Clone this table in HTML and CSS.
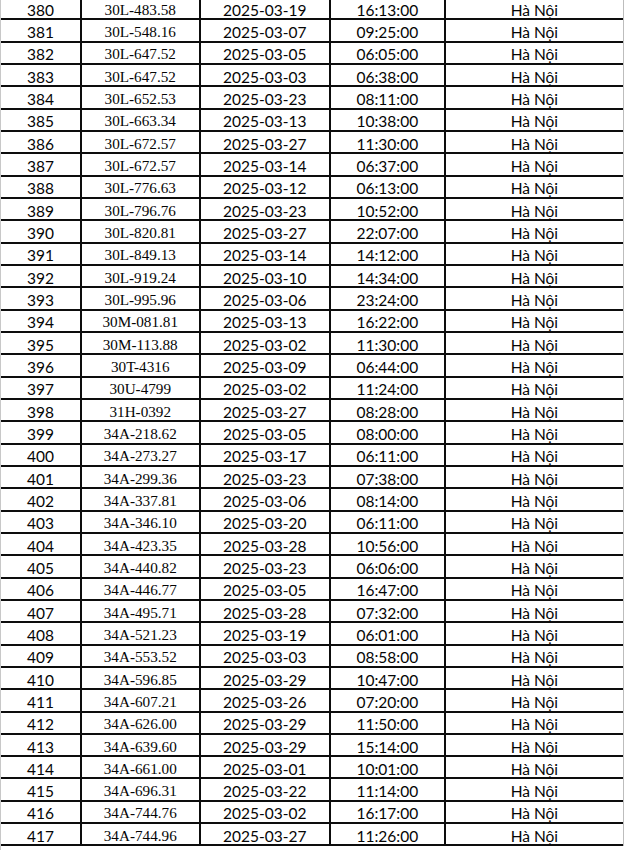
FILE: index.html
```html
<!DOCTYPE html>
<html lang="vi">
<head>
<meta charset="utf-8">
<title>Danh sách</title>
<link rel="stylesheet" href="styles.css">
</head>
<body>
<div class="sheet">
<div class="grid" id="grid">
<div class="c n">380</div><div class="c p">30L-483.58</div><div class="c d">2025-03-19</div><div class="c t">16:13:00</div><div class="c h">Hà Nội</div>
<div class="c n">381</div><div class="c p">30L-548.16</div><div class="c d">2025-03-07</div><div class="c t">09:25:00</div><div class="c h">Hà Nội</div>
<div class="c n">382</div><div class="c p">30L-647.52</div><div class="c d">2025-03-05</div><div class="c t">06:05:00</div><div class="c h">Hà Nội</div>
<div class="c n">383</div><div class="c p">30L-647.52</div><div class="c d">2025-03-03</div><div class="c t">06:38:00</div><div class="c h">Hà Nội</div>
<div class="c n">384</div><div class="c p">30L-652.53</div><div class="c d">2025-03-23</div><div class="c t">08:11:00</div><div class="c h">Hà Nội</div>
<div class="c n">385</div><div class="c p">30L-663.34</div><div class="c d">2025-03-13</div><div class="c t">10:38:00</div><div class="c h">Hà Nội</div>
<div class="c n">386</div><div class="c p">30L-672.57</div><div class="c d">2025-03-27</div><div class="c t">11:30:00</div><div class="c h">Hà Nội</div>
<div class="c n">387</div><div class="c p">30L-672.57</div><div class="c d">2025-03-14</div><div class="c t">06:37:00</div><div class="c h">Hà Nội</div>
<div class="c n">388</div><div class="c p">30L-776.63</div><div class="c d">2025-03-12</div><div class="c t">06:13:00</div><div class="c h">Hà Nội</div>
<div class="c n">389</div><div class="c p">30L-796.76</div><div class="c d">2025-03-23</div><div class="c t">10:52:00</div><div class="c h">Hà Nội</div>
<div class="c n">390</div><div class="c p">30L-820.81</div><div class="c d">2025-03-27</div><div class="c t">22:07:00</div><div class="c h">Hà Nội</div>
<div class="c n">391</div><div class="c p">30L-849.13</div><div class="c d">2025-03-14</div><div class="c t">14:12:00</div><div class="c h">Hà Nội</div>
<div class="c n">392</div><div class="c p">30L-919.24</div><div class="c d">2025-03-10</div><div class="c t">14:34:00</div><div class="c h">Hà Nội</div>
<div class="c n">393</div><div class="c p">30L-995.96</div><div class="c d">2025-03-06</div><div class="c t">23:24:00</div><div class="c h">Hà Nội</div>
<div class="c n">394</div><div class="c p">30M-081.81</div><div class="c d">2025-03-13</div><div class="c t">16:22:00</div><div class="c h">Hà Nội</div>
<div class="c n">395</div><div class="c p">30M-113.88</div><div class="c d">2025-03-02</div><div class="c t">11:30:00</div><div class="c h">Hà Nội</div>
<div class="c n">396</div><div class="c p">30T-4316</div><div class="c d">2025-03-09</div><div class="c t">06:44:00</div><div class="c h">Hà Nội</div>
<div class="c n">397</div><div class="c p">30U-4799</div><div class="c d">2025-03-02</div><div class="c t">11:24:00</div><div class="c h">Hà Nội</div>
<div class="c n">398</div><div class="c p">31H-0392</div><div class="c d">2025-03-27</div><div class="c t">08:28:00</div><div class="c h">Hà Nội</div>
<div class="c n">399</div><div class="c p">34A-218.62</div><div class="c d">2025-03-05</div><div class="c t">08:00:00</div><div class="c h">Hà Nội</div>
<div class="c n">400</div><div class="c p">34A-273.27</div><div class="c d">2025-03-17</div><div class="c t">06:11:00</div><div class="c h">Hà Nội</div>
<div class="c n">401</div><div class="c p">34A-299.36</div><div class="c d">2025-03-23</div><div class="c t">07:38:00</div><div class="c h">Hà Nội</div>
<div class="c n">402</div><div class="c p">34A-337.81</div><div class="c d">2025-03-06</div><div class="c t">08:14:00</div><div class="c h">Hà Nội</div>
<div class="c n">403</div><div class="c p">34A-346.10</div><div class="c d">2025-03-20</div><div class="c t">06:11:00</div><div class="c h">Hà Nội</div>
<div class="c n">404</div><div class="c p">34A-423.35</div><div class="c d">2025-03-28</div><div class="c t">10:56:00</div><div class="c h">Hà Nội</div>
<div class="c n">405</div><div class="c p">34A-440.82</div><div class="c d">2025-03-23</div><div class="c t">06:06:00</div><div class="c h">Hà Nội</div>
<div class="c n">406</div><div class="c p">34A-446.77</div><div class="c d">2025-03-05</div><div class="c t">16:47:00</div><div class="c h">Hà Nội</div>
<div class="c n">407</div><div class="c p">34A-495.71</div><div class="c d">2025-03-28</div><div class="c t">07:32:00</div><div class="c h">Hà Nội</div>
<div class="c n">408</div><div class="c p">34A-521.23</div><div class="c d">2025-03-19</div><div class="c t">06:01:00</div><div class="c h">Hà Nội</div>
<div class="c n">409</div><div class="c p">34A-553.52</div><div class="c d">2025-03-03</div><div class="c t">08:58:00</div><div class="c h">Hà Nội</div>
<div class="c n">410</div><div class="c p">34A-596.85</div><div class="c d">2025-03-29</div><div class="c t">10:47:00</div><div class="c h">Hà Nội</div>
<div class="c n">411</div><div class="c p">34A-607.21</div><div class="c d">2025-03-26</div><div class="c t">07:20:00</div><div class="c h">Hà Nội</div>
<div class="c n">412</div><div class="c p">34A-626.00</div><div class="c d">2025-03-29</div><div class="c t">11:50:00</div><div class="c h">Hà Nội</div>
<div class="c n">413</div><div class="c p">34A-639.60</div><div class="c d">2025-03-29</div><div class="c t">15:14:00</div><div class="c h">Hà Nội</div>
<div class="c n">414</div><div class="c p">34A-661.00</div><div class="c d">2025-03-01</div><div class="c t">10:01:00</div><div class="c h">Hà Nội</div>
<div class="c n">415</div><div class="c p">34A-696.31</div><div class="c d">2025-03-22</div><div class="c t">11:14:00</div><div class="c h">Hà Nội</div>
<div class="c n">416</div><div class="c p">34A-744.76</div><div class="c d">2025-03-02</div><div class="c t">16:17:00</div><div class="c h">Hà Nội</div>
<div class="c n">417</div><div class="c p">34A-744.96</div><div class="c d">2025-03-27</div><div class="c t">11:26:00</div><div class="c h">Hà Nội</div>
</div>
</div>
</body>
</html>
```
FILE: styles.css
```css
html, body {
  margin: 0;
  padding: 0;
  background: #ffffff;
  overflow: hidden;
}
.sheet {
  width: 624px;
  height: 850px;
  overflow: hidden;
  border-left: 1px solid #c8c8c8;
  box-sizing: border-box;
}
.grid {
  margin-top: -2px;
  display: grid;
  grid-template-columns: 81px 118.5px 130.5px 114.7px 177.3px;
  grid-auto-rows: 22.33px;
  border-right: 1px solid #bdbdbd;
  width: 622px;
}
.c {
  box-sizing: border-box;
  border-bottom: 2px solid #0d0d0d;
  border-right: 2px solid #0d0d0d;
  display: flex;
  align-items: center;
  justify-content: center;
  padding-top: 3px;
  color: #050505;
  font-family: Lato, "Noto Sans", sans-serif;
  font-size: 15.5px;
  white-space: nowrap;
}
.c.h { border-right: none; }
.c.p {
  font-family: "Liberation Serif", "DejaVu Serif", serif;
  font-size: 15.2px;
}
```
